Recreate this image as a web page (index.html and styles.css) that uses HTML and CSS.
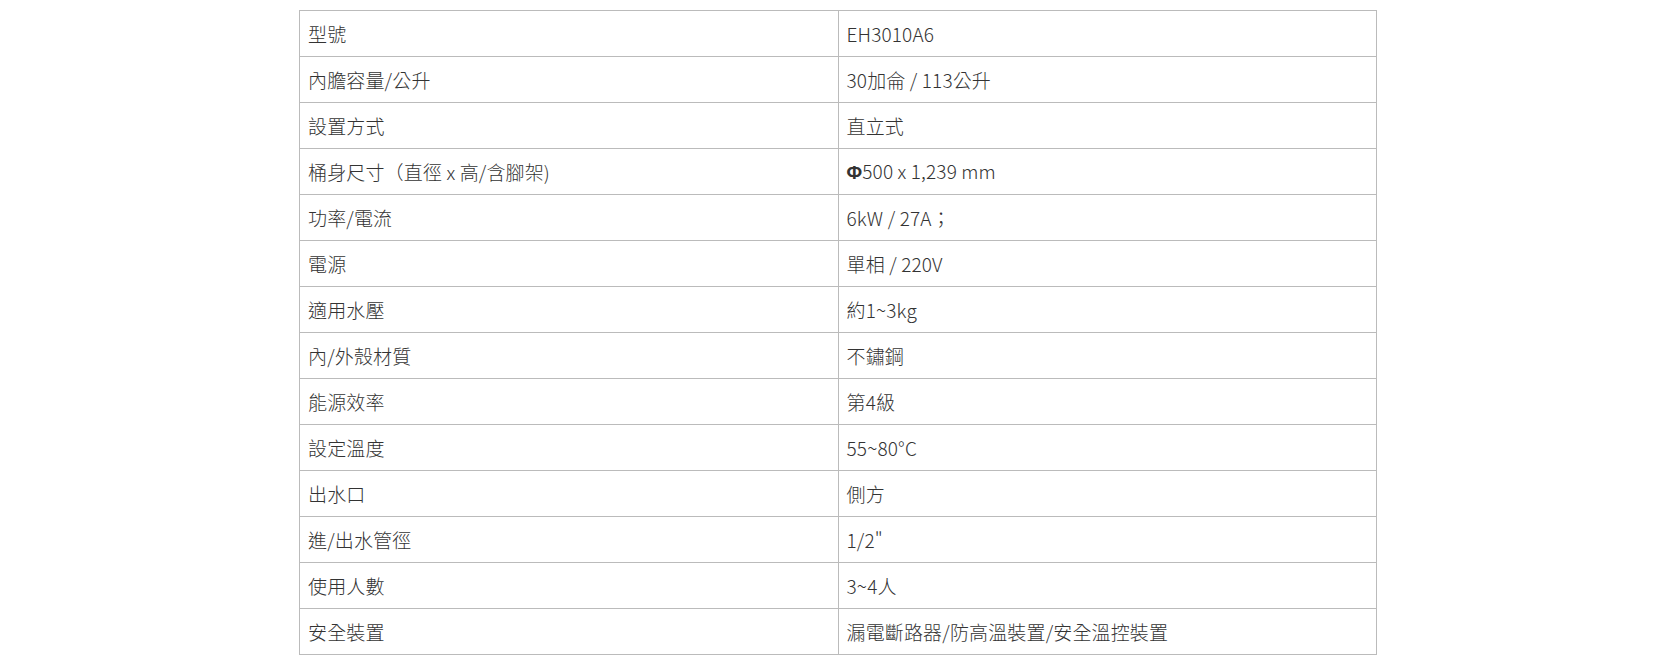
FILE: index.html
```html
<!DOCTYPE html>
<html lang="zh-Hant">
<head>
<meta charset="utf-8">
<link rel="stylesheet" href="styles.css">
</head>
<body>
<table class="spec">
<tbody>
<tr><td>型號</td><td>EH3010A6</td></tr>
<tr><td>內膽容量/公升</td><td>30加侖 / 113公升</td></tr>
<tr><td>設置方式</td><td>直立式</td></tr>
<tr><td>桶身尺寸（直徑 x 高/含腳架)</td><td><span class="phi">Φ</span>500 x 1,239 mm</td></tr>
<tr><td>功率/電流</td><td>6kW / 27A；</td></tr>
<tr><td>電源</td><td>單相 / 220V</td></tr>
<tr><td>適用水壓</td><td>約1~3kg</td></tr>
<tr><td>內/外殼材質</td><td>不鏽鋼</td></tr>
<tr><td>能源效率</td><td>第4級</td></tr>
<tr><td>設定溫度</td><td>55~80°C</td></tr>
<tr><td>出水口</td><td>側方</td></tr>
<tr><td>進/出水管徑</td><td>1/2"</td></tr>
<tr><td>使用人數</td><td>3~4人</td></tr>
<tr><td>安全裝置</td><td>漏電斷路器/防高溫裝置/安全溫控裝置</td></tr>
</tbody>
</table>
</body>
</html>
```
FILE: styles.css
```css
html, body {
  margin: 0;
  padding: 0;
  background: #fff;
}
body {
  font-family: "Noto Sans CJK TC", "Noto Sans", sans-serif;
  color: #333;
}
.spec {
  border-collapse: collapse;
  margin: 10px 0 0 299px;
  width: 1078px;
  table-layout: fixed;
}
.spec td {
  border: 1px solid #bbb;
  height: 46px;
  box-sizing: border-box;
  padding: 1px 8px 0;
  font-size: 19px;
  font-weight: 300;
  line-height: 28px;
  letter-spacing: 0.15px;
  vertical-align: middle;
  width: 50%;
}
.phi {
  font-family: "Liberation Sans", sans-serif;
  font-weight: 700;
  font-size: 19px;
}
```
